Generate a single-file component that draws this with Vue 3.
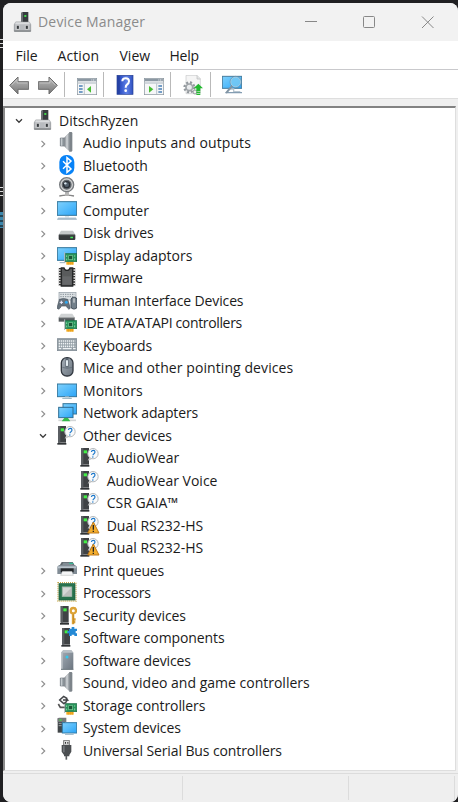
<script setup>
const menus = ['File', 'Action', 'View', 'Help']
const tools = ['back', 'forward', '|', 'tree', '|', 'help', 'panel', '|', 'update', '|', 'scan']
const rows = [
  { level: 0, icon: 'root', text: 'DitschRyzen', open: true },
  { icon: 'speaker', text: 'Audio inputs and outputs', track: 0.1 },
  { icon: 'bluetooth', text: 'Bluetooth', track: 0.05 },
  { icon: 'camera', text: 'Cameras', track: -0.25 },
  { icon: 'computer', text: 'Computer' },
  { icon: 'disk', text: 'Disk drives' },
  { icon: 'display', text: 'Display adaptors' },
  { icon: 'firmware', text: 'Firmware', track: -0.25 },
  { icon: 'hid', text: 'Human Interface Devices', track: -0.13 },
  { icon: 'ide', text: 'IDE ATA/ATAPI controllers', track: -0.35 },
  { icon: 'keyboard', text: 'Keyboards' },
  { icon: 'mouse', text: 'Mice and other pointing devices', track: 0.08 },
  { icon: 'monitor', text: 'Monitors', track: 0.1 },
  { icon: 'network', text: 'Network adapters', track: -0.14 },
  { icon: 'unknown', text: 'Other devices', open: true, track: -0.08 },
  { level: 2, icon: 'unknown', text: 'AudioWear', track: 0.05 },
  { level: 2, icon: 'unknown', text: 'AudioWear Voice' },
  { level: 2, icon: 'unknown', text: 'CSR GAIA™' },
  { level: 2, icon: 'unknown', text: 'Dual RS232-HS', warn: true },
  { level: 2, icon: 'unknown', text: 'Dual RS232-HS', warn: true },
  { icon: 'printer', text: 'Print queues', track: -0.16 },
  { icon: 'cpu', text: 'Processors', track: -0.38 },
  { icon: 'security', text: 'Security devices', track: -0.06 },
  { icon: 'component', text: 'Software components', track: -0.1 },
  { icon: 'softdev', text: 'Software devices', track: -0.13 },
  { icon: 'speaker', text: 'Sound, video and game controllers' },
  { icon: 'storage', text: 'Storage controllers', track: -0.08 },
  { icon: 'system', text: 'System devices', track: -0.08 },
  { icon: 'usb', text: 'Universal Serial Bus controllers', track: -0.11 },
].map((r) => ({ level: 1, track: 0, ...r }))
</script>

<template>
  <div class="desktop">
    <svg class="defs" width="0" height="0">
      <defs>
        <linearGradient id="screen" x1="0" y1="0" x2="1" y2="1"><stop offset="0" stop-color="#7fd0fb" /><stop offset=".5" stop-color="#55bcfb" /><stop offset="1" stop-color="#2ba3f6" /></linearGradient>
        <linearGradient id="metal" x1="0" y1="0" x2="1" y2="0"><stop offset="0" stop-color="#777d83" /><stop offset=".5" stop-color="#d5d9dc" /><stop offset="1" stop-color="#7a8086" /></linearGradient>
        <linearGradient id="arrowFill" x1="0" y1="0" x2="0" y2="1"><stop offset="0" stop-color="#bdbdbd" /><stop offset="1" stop-color="#777" /></linearGradient>
        <linearGradient id="slate" x1="0" y1="0" x2="1" y2="1"><stop offset="0" stop-color="#a5aeb7" /><stop offset="1" stop-color="#6b757f" /></linearGradient>
        <linearGradient id="helpFill" x1="0" y1="0" x2="1" y2="0"><stop offset="0" stop-color="#2440a8" /><stop offset=".2" stop-color="#2f51c5" /><stop offset=".6" stop-color="#5e80e6" /><stop offset="1" stop-color="#2f50c0" /></linearGradient>
        <g id="card">
          <rect x="28" y="50" width="22" height="9" fill="#f5ad22" />
          <path d="M34 51v8M40 51v8M46 51v8" stroke="#d78d15" stroke-width="1.5" />
          <rect x="25" y="26" width="34" height="24" fill="#27935a" stroke="#1b6e44" stroke-width="2" />
          <rect x="35" y="32" width="12" height="12" fill="#1b5536" stroke="#7bcb98" stroke-width="2" />
          <path d="M23 22v32" stroke="#b4babc" stroke-width="3" />
          <path d="M29 31v5m0 5v5M53 31v4m0 5v6" stroke="#80d2a0" stroke-width="3" />
        </g>
        <g id="tower">
          <path d="M3 3h24v50H3z" fill="#3f4245" /><path d="M3 3h7v50H3z" fill="#5a5e62" />
          <path d="M1 54h27v5H1z" fill="#303336" /><path d="M11 10h10v9H11z" fill="#43ed47" />
        </g>
        <g id="backArrow"><path d="M2 31L27 6v14h32v23H27v14z" fill="url(#arrowFill)" stroke="#6d6d6d" stroke-width="3" stroke-linejoin="round" /><path d="M8 31L24 14v10h31" fill="none" stroke="#ccc" stroke-width="2" /></g>
        <g id="paneWindow">
          <rect x="1" y="10" width="58" height="49" fill="#f6f7f8" stroke="#84909a" stroke-width="2" /><path d="M2 11h56v8H2z" fill="#8b98a3" /><path d="M43 15h12" stroke="#e9edf0" stroke-width="3" stroke-dasharray="3 2" /><path d="M2 22h56v4H2z" fill="#c5cdd3" />
        </g>

        <symbol id="i-root" viewBox="0 0 60 60">
          <path d="M25 2l5-2h16v31H25z" fill="#373b3f" /><path d="M25 2l5-2v31h-5z" fill="#686d71" /><path d="M34 9h6v6h-6z" fill="#42d84b" />
          <path d="M8 30h41l4 8v20H4V38z" fill="#b8bbbf" stroke="#85898d" stroke-width="2" /><path d="M7 31h43v6H7z" fill="#dadcde" />
          <path d="M10 40h9v12h-9zM37 40h9v12h-9z" fill="#363a3e" stroke="#f1f1f1" stroke-width="2" /><path d="M4 57h49" stroke="#717477" stroke-width="3" />
        </symbol>
        <symbol id="i-speaker" viewBox="0 0 60 60">
          <path d="M10 18h12v24H10z" fill="#8f969c" stroke="#6c747b" stroke-width="2" />
          <path d="M22 17L38 1v57L22 43z" fill="url(#metal)" stroke="#8b9298" />
          <path d="M37 0h6q3 0 3 4v51q0 4-3 4h-6z" fill="#7d848a" /><path d="M12 19h4v22h-4z" fill="#c3c9cd" />
        </symbol>
        <symbol id="i-bluetooth" viewBox="0 0 60 60">
          <rect x="7" y="0" width="45" height="60" rx="21" fill="#0883f7" />
          <path d="M18 19l24 23-12 10V8l12 10-24 23" fill="none" stroke="#fff" stroke-width="4.5" />
        </symbol>
        <symbol id="i-camera" viewBox="0 0 60 60">
          <path d="M7 57q22-5 44 0" fill="none" stroke="#858585" stroke-width="4" /><path d="M24 42h12v14H24z" fill="#b7b7b7" />
          <circle cx="29" cy="23" r="21" fill="#d0d1d2" stroke="#777b7f" stroke-width="4" />
          <circle cx="29" cy="23" r="13" fill="#292e35" stroke="#62686e" stroke-width="4" /><circle cx="29" cy="23" r="7" fill="#53606d" /><circle cx="25" cy="19" r="3.5" fill="#d8e4ed" />
        </symbol>
        <symbol id="i-computer" viewBox="0 0 60 60">
          <rect x="1" y="5" width="58" height="41" fill="url(#screen)" stroke="#34769b" stroke-width="3" />
          <path d="M24 48h12v5H24z" fill="#dce5e9" /><path d="M3 53h54l3 6H0z" fill="#9ab1c1" /><path d="M3 54h54" stroke="#c8d7e1" stroke-width="2" />
        </symbol>
        <symbol id="i-disk" viewBox="0 0 60 60">
          <path d="M12 26h36l7 12H5z" fill="#c5c8c9" /><path d="M5 38h50v13q0 3-3 3H8q-3 0-3-3z" fill="#36393b" /><path d="M6 38h48" stroke="#74787a" stroke-width="3" /><path d="M40 44h8v5h-8z" fill="#45e65b" />
        </symbol>
        <symbol id="i-display" viewBox="0 0 60 60">
          <rect x="1" y="8" width="58" height="38" fill="url(#screen)" stroke="#34769b" stroke-width="3" /><path d="M8 53h17" stroke="#9ab1c1" stroke-width="3" /><use href="#card" />
        </symbol>
        <symbol id="i-firmware" viewBox="0 0 60 60">
          <path d="M13 3h8q2 7 9 7t9-7h8v54H13z" fill="#595b5c" stroke="#252728" stroke-width="4" />
          <path d="M9 3v54M51 3v54" stroke="#333" stroke-width="7" /><path d="M8 7v50M52 7v50" stroke="#e4e4e4" stroke-width="5" stroke-dasharray="4 4" />
          <path d="M17 28h26v25H17z" fill="#707273" opacity=".6" />
        </symbol>
        <symbol id="i-hid" viewBox="0 0 60 60">
          <rect x="6" y="7" width="51" height="23" fill="#dde2e5" stroke="#8f9aa2" stroke-width="2" /><path d="M10 13h43M10 20h43" stroke="#899198" stroke-width="3" stroke-dasharray="4 3" />
          <path d="M7 28q12-5 25 0l8 26q-5 9-12-6H13Q6 63 0 54z" fill="#66727d" stroke="#4a555f" stroke-width="2" />
          <path d="M8 37h10M13 32v10" stroke="#eef" stroke-width="3" /><circle cx="28" cy="37" r="4.500" fill="#31a8ef" />
          <rect x="42" y="22" width="18" height="35" rx="8" fill="#73808b" stroke="#46515c" stroke-width="3" /><path d="M51 25v13" stroke="#eee" stroke-width="3" />
        </symbol>
        <symbol id="i-ide" viewBox="0 0 60 60">
          <path d="M12 5h34l7 11H5z" fill="#d0d3d4" /><path d="M5 16h48v13H5z" fill="#565b5e" /><path d="M7 17h44" stroke="#a8abad" stroke-width="3" /><use href="#card" />
        </symbol>
        <symbol id="i-keyboard" viewBox="0 0 60 60">
          <rect x="1" y="11" width="58" height="36" fill="#8f9aa2" stroke="#7b8790" stroke-width="2" />
          <path d="M5 18h50M5 26h50M5 34h50" stroke="#eef2f4" stroke-width="5" stroke-dasharray="4 2" /><path d="M5 41h8m4 0h27m4 0h8" stroke="#eef2f4" stroke-width="4" />
        </symbol>
        <symbol id="i-mouse" viewBox="0 0 60 60">
          <rect x="13" y="2" width="35" height="55" rx="16" fill="url(#slate)" stroke="#353b43" stroke-width="4" /><path d="M16 31q14 6 29 0" fill="none" stroke="#5b6872" stroke-width="2" />
          <path d="M30 3v28" stroke="#56616c" stroke-width="9" /><rect x="27" y="9" width="6" height="19" rx="3" fill="#e4edf2" />
        </symbol>
        <symbol id="i-monitor" viewBox="0 0 60 60">
          <rect x="1" y="12" width="58" height="38" fill="url(#screen)" stroke="#34769b" stroke-width="3" /><path d="M24 51h12v4h8" fill="none" stroke="#becdd5" stroke-width="3" /><path d="M16 55h28" stroke="#8faebc" stroke-width="3" />
        </symbol>
        <symbol id="i-network" viewBox="0 0 60 60">
          <rect x="18" y="5" width="41" height="31" fill="url(#screen)" stroke="#34769b" stroke-width="3" />
          <rect x="5" y="16" width="43" height="31" fill="url(#screen)" stroke="#2f6e94" stroke-width="3" />
          <path d="M4 55h53" stroke="#d2d5d6" stroke-width="5" /><path d="M22 48h11l7 10H14z" fill="#34ba4b" />
        </symbol>
        <symbol id="i-unknown" viewBox="0 0 60 60">
          <use href="#tower" /><path d="M29 32l-5 8 11-5" fill="#eee" stroke="#aaa" stroke-width="2" />
          <circle cx="39" cy="20" r="15.5" fill="#f9fafb" stroke="#b5b9bc" stroke-width="3" />
          <path d="M34 15q1-5 6-5t5 5q0 3-4 6-2 1-2 4" fill="none" stroke="#1976c9" stroke-width="3.4" /><circle cx="38.5" cy="30" r="2.2" fill="#1976c9" />
        </symbol>
        <symbol id="i-warn" viewBox="0 0 60 60">
          <path d="M40 21L57 54H23z" fill="#f4ae2d" stroke="#be791a" stroke-width="3" stroke-linejoin="round" /><path d="M40 30v14" stroke="#222" stroke-width="4" /><path d="M38 47h4v4h-4z" fill="#222" />
        </symbol>
        <symbol id="i-printer" viewBox="0 0 60 60">
          <path d="M14 6h33l7 12H7z" fill="#626a70" /><path d="M19 8h25l4 8H15z" fill="#818c94" /><path d="M36 8h12l2 4H37z" fill="#37b895" />
          <path d="M1 20l5-5h48l6 5v22H1z" fill="#818c95" /><path d="M2 19h56v6H2z" fill="#b9c4cc" /><path d="M11 25h39v12H11z" fill="#222629" /><path d="M16 34h29l4 12H11z" fill="#f4f5f6" stroke="#898f92" />
        </symbol>
        <symbol id="i-cpu" viewBox="0 0 60 60">
          <rect x="3" y="2" width="54" height="55" fill="none" stroke="#c5a548" stroke-width="4" stroke-dasharray="3 3" /><rect x="6" y="5" width="48" height="49" fill="#28724d" stroke="#195f3e" stroke-width="2" />
          <rect x="16" y="15" width="28" height="28" fill="#d5d7d6" stroke="#a3b9ab" stroke-width="3" /><path d="M18 42l25-25v25z" fill="#bcbfbd" />
        </symbol>
        <symbol id="i-security" viewBox="0 0 60 60">
          <use href="#tower" x="8" /><circle cx="49" cy="17" r="8" fill="#fff" stroke="#dca337" stroke-width="7" /><path d="M48 25v33M48 43h8M48 51h7" stroke="#dca337" stroke-width="7" /><path d="M50 28v28" stroke="#b67c1d" stroke-width="2" />
        </symbol>
        <symbol id="i-component" viewBox="0 0 60 60">
          <use href="#tower" x="12" /><path d="M36 5h8V0h8v5h8v7h-4v7h4v8h-8v-4h-8v4h-8v-8h-5v-7h5z" fill="#2489d5" />
        </symbol>
        <symbol id="i-softdev" viewBox="0 0 60 60">
          <path d="M12 8l7-8h23l7 8v51H12z" fill="url(#slate)" /><path d="M12 8l7-8h23l7 8z" fill="#b9c0c6" /><path d="M12 8h5v51h-5z" fill="#bdc3c8" /><circle cx="30" cy="21" r="4.5" fill="#35c8ed" /><path d="M12 58h37" stroke="#737d84" stroke-width="3" />
        </symbol>
        <symbol id="i-storage" viewBox="0 0 60 60">
          <use href="#card" />
          <path d="M31 11L20 4 8 15l12 11 8-5" fill="#f5f5f5" stroke="#424548" stroke-width="4.500" /><path d="M18 15h14l-5-5m5 5l-5 5" fill="none" stroke="#424548" stroke-width="4" /><path d="M4 27l6 10h13" fill="none" stroke="#555" stroke-width="5" />
        </symbol>
        <symbol id="i-system" viewBox="0 0 60 60">
          <path d="M2 4h22v43H2z" fill="#414649" /><path d="M2 4l4-2h22v13H2z" fill="#75797b" /><path d="M7 7h7v4H7z" fill="#44df4a" /><path d="M5 19h9M5 26h9" stroke="#9ca2a5" stroke-width="3" />
          <rect x="16" y="17" width="43" height="31" fill="url(#screen)" stroke="#347da8" stroke-width="3" /><path d="M24 52h26" stroke="#a9c1cf" stroke-width="4" />
        </symbol>
        <symbol id="i-usb" viewBox="0 0 60 60">
          <path d="M20 1h17v15H20z" fill="#ddd" stroke="#777" stroke-width="3" /><path d="M24 6h3v5h-3zM31 6h3v5h-3z" fill="#333" />
          <path d="M14 15h29v20l-6 10v4H21v-4l-7-10z" fill="#4b4e51" /><path d="M18 17h5v20h-5z" fill="#73767a" /><path d="M28 48v11" stroke="#585b5e" stroke-width="5" />
        </symbol>

        <symbol id="i-back" viewBox="0 0 60 60"><use href="#backArrow" /></symbol>
        <symbol id="i-forward" viewBox="0 0 60 60"><g transform="matrix(-1 0 0 1 60 0)"><use href="#backArrow" /></g></symbol>
        <symbol id="i-tree" viewBox="0 0 60 60">
          <use href="#paneWindow" /><path d="M22 26v32" stroke="#9caab6" stroke-width="2" /><path d="M6 33h11M6 42h11M6 51h11" stroke="#4a80b5" stroke-width="4" /><path d="M42 33v20L30 43z" fill="#48bd33" />
        </symbol>
        <symbol id="i-panel" viewBox="0 0 60 60">
          <use href="#paneWindow" /><path d="M38 26v32" stroke="#9caab6" stroke-width="2" /><path d="M43 33h11M43 42h11M43 51h11" stroke="#4a80b5" stroke-width="4" /><path d="M15 33v20l13-10z" fill="#48bd33" />
        </symbol>
        <symbol id="i-help" viewBox="0 0 60 60">
          <rect x="6" y="1" width="48" height="57" fill="url(#helpFill)" stroke="#263f91" stroke-width="2" /><path d="M12 2v55" stroke="#1e3584" stroke-width="2" />
          <path d="M22 19q0-9 10-9t10 9q0 6-6 10-4 3-4 9" fill="none" stroke="#fff" stroke-width="6" /><circle cx="32" cy="47" r="4" fill="#fff" />
        </symbol>
        <symbol id="i-update" viewBox="0 0 60 60">
          <path d="M9 1h33l10 10v45H9z" fill="#f5f5f5" stroke="#c5c7c9" stroke-width="2" /><path d="M42 1v11h10" fill="#e4e5e6" stroke="#b9bbbd" stroke-width="2" />
          <circle cx="19" cy="37" r="14" fill="none" stroke="#92989d" stroke-width="8" stroke-dasharray="6 5" /><circle cx="19" cy="37" r="10" fill="#e9ebed" stroke="#a0a5a9" stroke-width="5" /><circle cx="36" cy="51" r="6" fill="#eee" stroke="#92989d" stroke-width="3" />
          <path d="M46 26l14 14h-8v9H40v-9h-8z" fill="#22b92f" /><path d="M40 52h12M40 58h12" stroke="#25bb32" stroke-width="4" />
        </symbol>
        <symbol id="i-scan" viewBox="0 0 60 60">
          <rect x="1" y="4" width="58" height="36" fill="url(#screen)" stroke="#467d9f" stroke-width="3" /><path d="M22 42h13v8h20" fill="none" stroke="#b7c5d0" stroke-width="4" /><path d="M10 53h50" stroke="#849db2" stroke-width="4" />
          <path d="M30 33L14 52" stroke="#8295a4" stroke-width="6" stroke-linecap="round" /><circle cx="41" cy="21" r="15" fill="#75c9f3" fill-opacity=".85" stroke="#a9cfe4" stroke-width="3" /><circle cx="41" cy="21" r="17" fill="none" stroke="#66879b" stroke-width="1.5" />
        </symbol>
      </defs>
    </svg>

    <i class="edge edge-a"></i><i class="edge edge-b"></i><i class="edge edge-c"></i>
    <main class="window">
      <header class="title">
        <svg class="app-icon" viewBox="0 0 60 60"><use href="#i-root" /></svg>
        <span class="caption">Device Manager</span>
        <svg class="controls" viewBox="0 0 140 20">
          <path d="M6 9.500h12" /><rect x="64.5" y="4.5" width="11" height="11" rx="1" /><path d="M123 4.500l11.500 11.500M134.500 4.500l-11.500 11.500" />
        </svg>
      </header>
      <nav class="menu"><span v-for="m in menus" :key="m" :class="'m-' + m">{{ m }}</span></nav>
      <div class="toolbar">
        <template v-for="(t, n) in tools" :key="n">
          <i v-if="t === '|'" class="sep"></i>
          <svg v-else :class="['tool', 't-' + t]"><use :href="'#i-' + t" /></svg>
        </template>
      </div>
      <section class="tree">
        <div v-for="(r, n) in rows" :key="n" :class="['row', 'level' + r.level]">
          <span class="twist">
            <svg v-if="r.open" class="open" viewBox="0 0 8 8"><path d="M1 2.300l3 3 3-3" /></svg>
            <svg v-else-if="r.level === 1" viewBox="0 0 8 8"><path d="M2.500 .8l3.200 3.200-3.200 3.200" /></svg>
          </span>
          <svg class="icon" viewBox="0 0 60 60"><use :href="'#i-' + r.icon" /><use v-if="r.warn" href="#i-warn" /></svg>
          <span class="label" :style="{ letterSpacing: r.track + 'px' }">{{ r.text }}</span>
        </div>
      </section>
      <footer class="status"><i></i><i></i><i></i></footer>
    </main>
  </div>
</template>

<style>
body { margin: 0; background: #202022; }
</style>
<style scoped>
.desktop { position: relative; box-sizing: border-box; width: 458px; height: 802px; padding: 3px 0 0 3px; background: #202022; overflow: hidden; font-family: "Open Sans", "Noto Sans", sans-serif; font-size: 14px; color: #1b1b1b; }
.defs { position: absolute; }
.edge { position: absolute; left: 0; width: 3px; }
.edge-a { top: 39px; height: 9px; background: repeating-linear-gradient(#ddd 0 1px, #222 1px 4px); }
.edge-b { top: 187px; height: 12px; background: repeating-linear-gradient(#ddd 0 1px, #222 1px 4px); }
.edge-c { top: 212px; height: 16px; background: repeating-linear-gradient(#3b87ac 0 3px, #245 3px 5px); }
.window { display: flex; flex-direction: column; box-sizing: border-box; width: 455px; height: 799px; border-radius: 8px; overflow: hidden; background: #efefef; }
.title { display: flex; align-items: center; height: 38px; flex: none; background: #f2f2f2; }
.app-icon { width: 20px; height: 20px; margin-left: 10px; margin-top: -1px; }
.caption { width: 110px; margin-left: 5px; margin-top: -2px; color: #8b8b8b; letter-spacing: .18px; white-space: nowrap; }
.controls { width: 140px; height: 20px; margin-left: 151px; margin-top: 0; fill: none; stroke: #888; stroke-width: 1; }
.menu { display: flex; align-items: center; height: 28px; flex: none; padding-left: 12.500px; background: #fff; border-bottom: 1px solid #c9c9cc; }
.m-File { width: 42px; } .m-Action { width: 62px; letter-spacing: .08px; } .m-View { width: 50px; } .m-Help { letter-spacing: -.2px; }
.toolbar { display: flex; align-items: center; height: 28px; flex: none; padding-left: 6px; background: #fff; border-bottom: 1px solid #dedede; }
.tool { width: 20px; height: 20px; margin-top: 1px; }
.sep { width: 1px; height: 25px; background: #b9b9b9; }
.tool.t-forward { margin: 1px 6px 0 9px; }
.tool.t-tree { margin: 1px 6px 0 12px; }
.tool.t-help { margin: 1px 9px 0 11px; }
.tool.t-panel { margin-right: 6px; }
.tool.t-update { margin: 1px 7px 0 12px; }
.tool.t-scan { margin-left: 11px; }
.tree { box-sizing: border-box; flex: none; width: 453px; height: 665px; margin-top: 7px; padding-top: 1.750px; background: #fff; border-top: 2px solid #828282; border-left: 2px solid #8a8a8a; border-right: 1px solid #dedede; border-bottom: 1px solid #dedede; }
.row { display: flex; height: 22.500px; }
.level0 { padding-left: 10px; }
.level1 { padding-left: 34px; }
.level2 { padding-left: 57.500px; }
.twist { display: flex; align-items: center; width: 8px; margin-right: 9.700px; }
.level0 .twist { margin-right: 10px; }
.twist svg { width: 8px; height: 8px; fill: none; stroke: #8e8e8e; stroke-width: 1.200; }
.twist .open { stroke: #3c3c3c; stroke-width: 1.300; }
.icon { flex: none; width: 20px; height: 20px; margin-right: 6.300px; }
.level2 .icon { margin-right: 6.500px; }
.level0 .icon { margin-right: 6px; }
.label { line-height: 22.500px; white-space: nowrap; }
.status { display: flex; flex: 1; margin-top: 2px; border-top: 1px solid #dcdcdc; background: #efefef; }
.status i { width: 165px; margin: 2px 0; border-right: 1px solid #dcdcdc; }
.status i:first-child { width: 179px; }
.status i:last-child { width: 105px; }
</style>
